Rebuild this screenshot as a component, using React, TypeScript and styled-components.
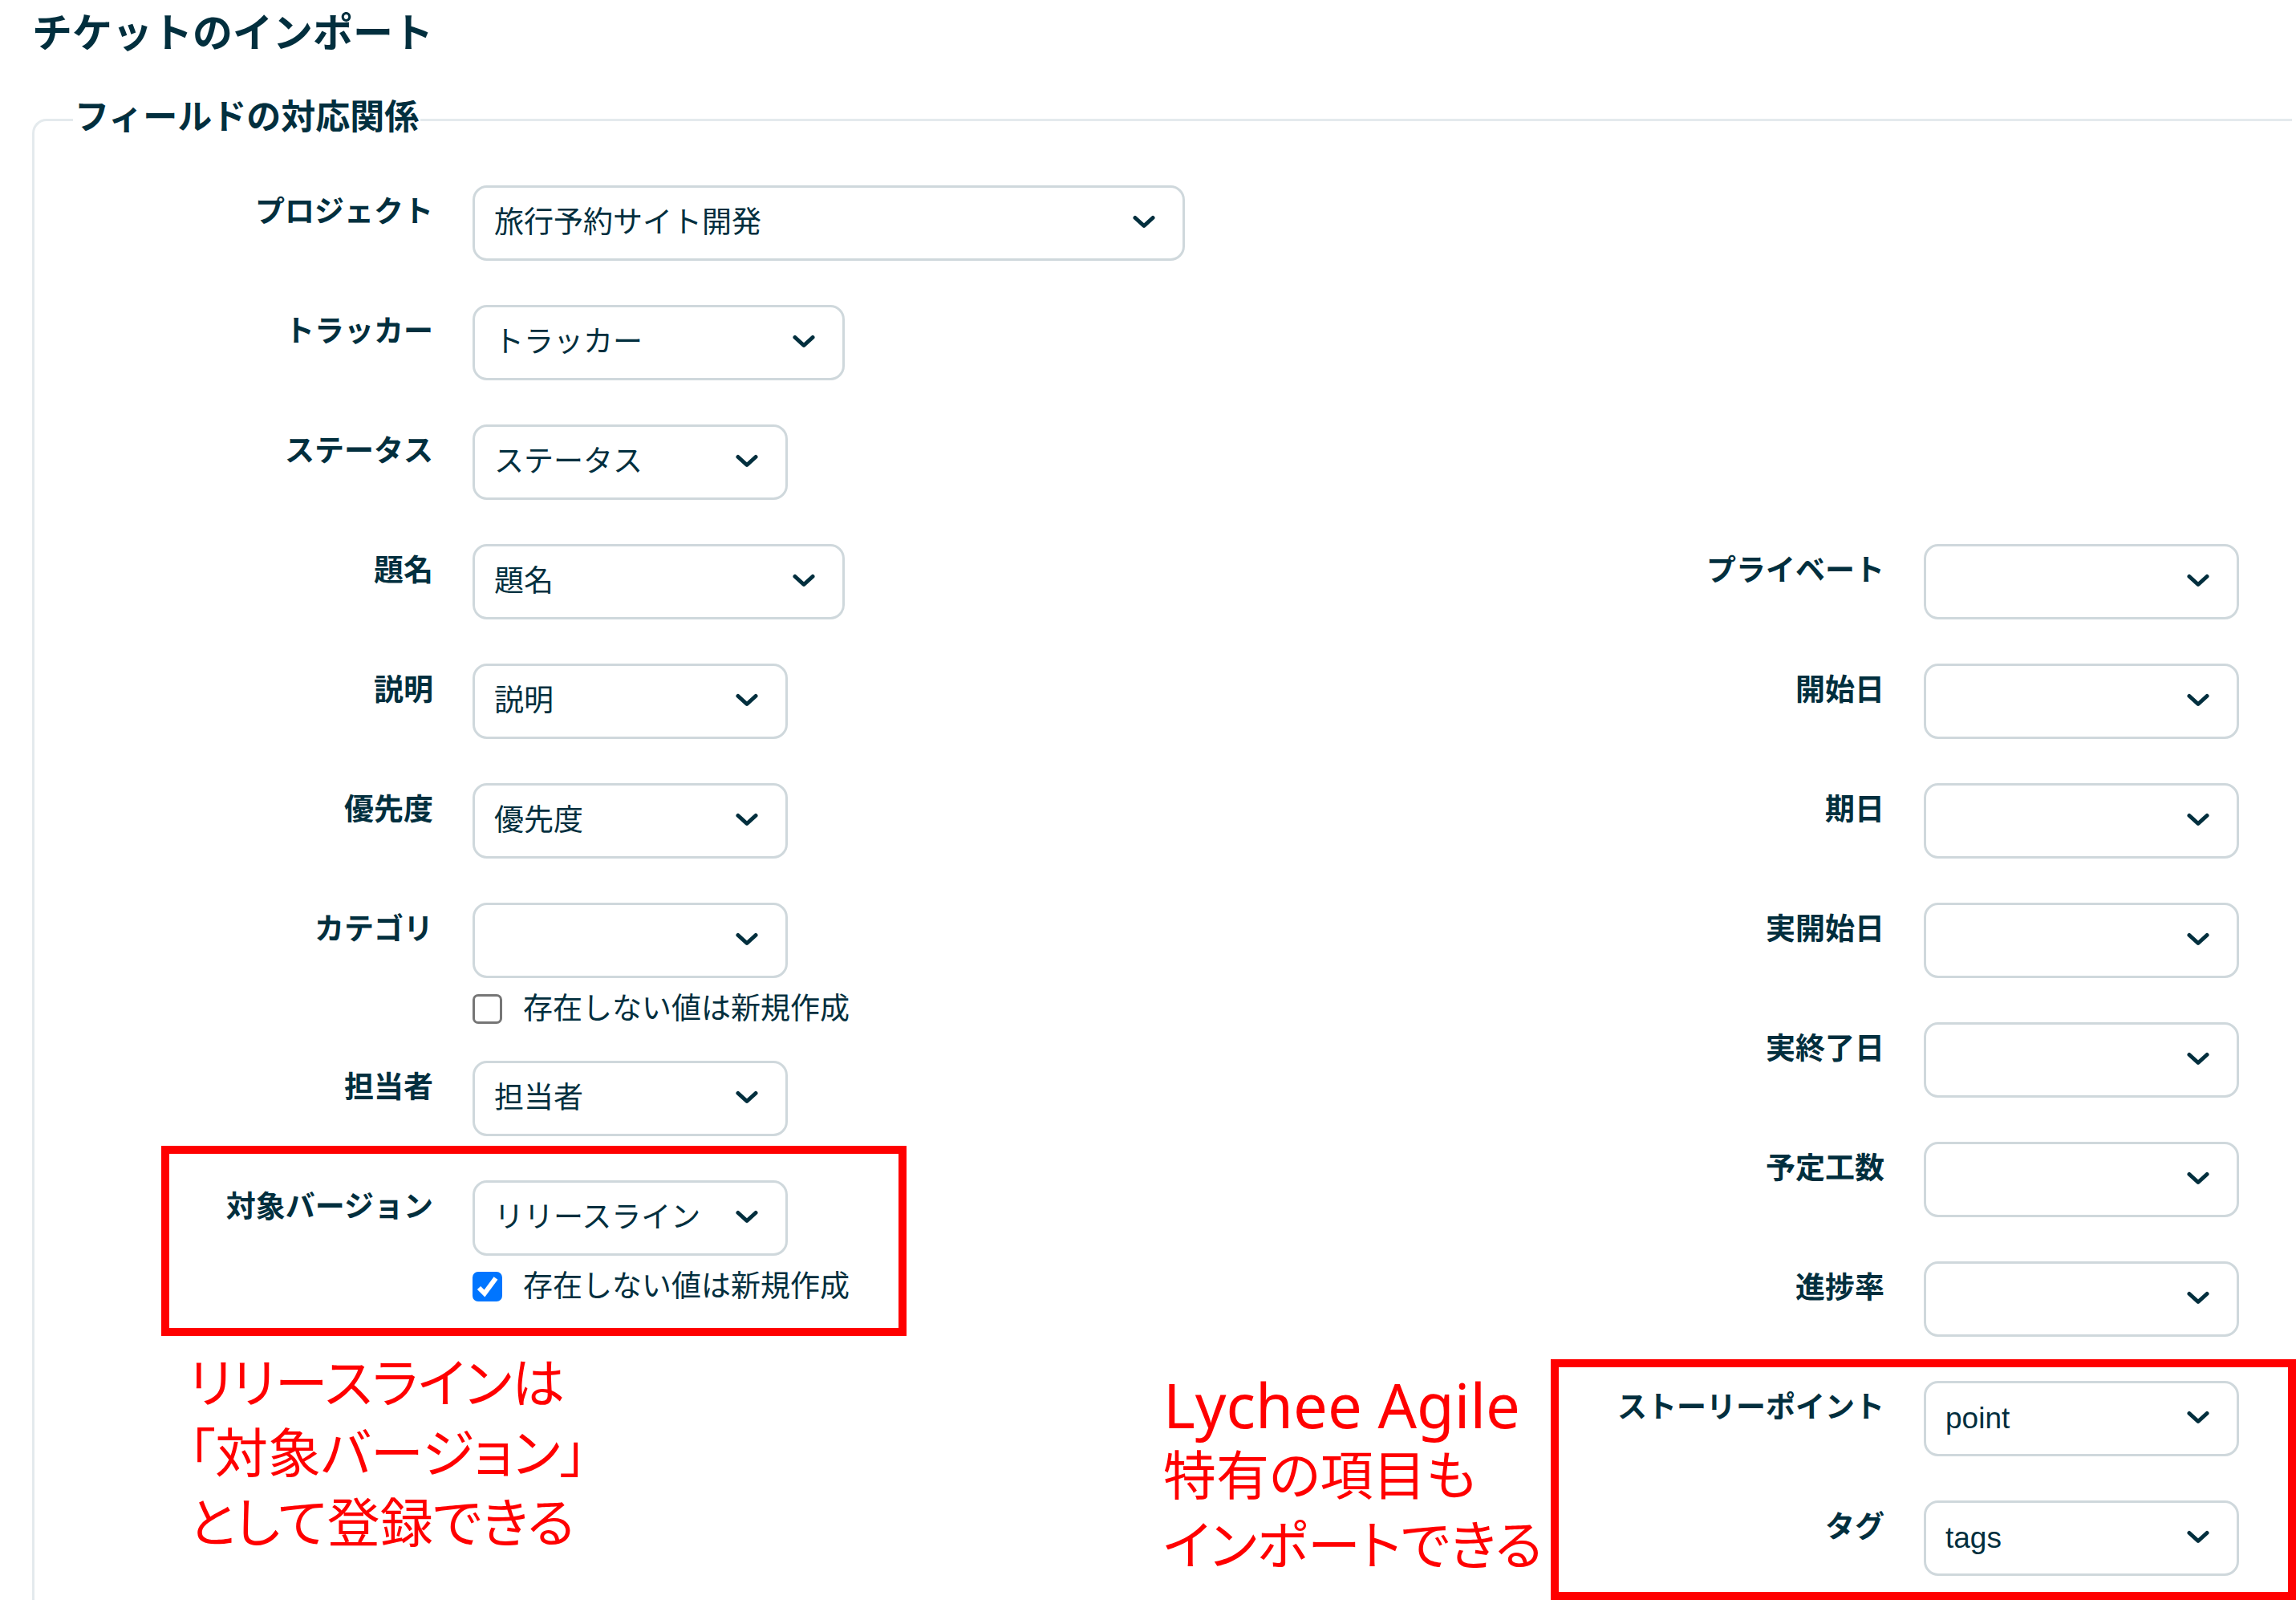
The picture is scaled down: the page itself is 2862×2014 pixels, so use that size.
import React from "react";
import styled, { createGlobalStyle } from "styled-components";

const ink = "#022f3e";
const red = "#ff0000";

const GlobalStyle = createGlobalStyle`
  * { box-sizing: border-box; }
  body {
    margin: 0;
    background: #fff;
    color: ${ink};
    font-family: "Liberation Sans", "Noto Sans CJK JP", sans-serif;
    font-size: 37px;
  }
`;

const Page = styled.main`
  padding: 6px 5px 20px 40px;
  overflow-x: clip;
`;

const Title = styled.h1`
  margin: 0 0 42px;
  font-size: 50px;
  line-height: 72px;
  font-weight: 700;
`;

const Fieldset = styled.fieldset`
  min-width: 0;
  margin: 0;
  padding: 53px 66px 30px 48px;
  border: 3px solid #e4eaed;
  border-right: 0;
  border-bottom: 0;
  border-radius: 18px 0 0 0;
`;

const Legend = styled.legend`
  padding: 0 2px 6px;
  font-size: 43px;
  line-height: 52px;
  font-weight: 700;
`;

const Columns = styled.div`
  display: flex;
  justify-content: space-between;
  align-items: flex-start;
`;

const Column = styled.div`
  display: flex;
  flex-direction: column;
`;

const Row = styled.div`
  display: grid;
  grid-template-columns: 449px auto;
  column-gap: 49px;
  align-items: start;
  justify-content: start;
  min-height: 149px;
  padding-bottom: 46px;
`;

const LastRow = styled(Row)`
  min-height: 0;
  padding-bottom: 0;
`;

const FieldLabel = styled.label`
  padding-top: 6px;
  line-height: 56px;
  font-weight: 700;
  text-align: right;
  white-space: nowrap;
`;

const Control = styled.div`
  display: flex;
  flex-direction: column;
  align-items: flex-start;
  gap: 20px;
`;

const SelectBox = styled.div`
  display: grid;
  align-items: center;

  > * { grid-area: 1 / 1; }

  > svg {
    justify-self: end;
    margin: 0 37px 2px 0;
    pointer-events: none;
  }
`;

const widths = { regular: 393, wide: 464, full: 888 };
type Size = keyof typeof widths;

const Select = styled.select<{ $size: Size }>`
  appearance: none;
  width: ${(p) => widths[p.$size]}px;
  height: 94px;
  margin: 0;
  padding: 0 80px 2px 24px;
  border: 3px solid #cfd8dc;
  border-radius: 18px;
  background: #fff;
  color: inherit;
  font: inherit;
`;

const CheckLabel = styled.label`
  display: flex;
  align-items: center;
  gap: 26px;
  height: 37px;
  line-height: 37px;
  white-space: nowrap;
`;

const CheckBox = styled.span`
  display: grid;

  > * { grid-area: 1 / 1; }
  > svg { pointer-events: none; }
`;

const CheckInput = styled.input`
  appearance: none;
  width: 37px;
  height: 37px;
  margin: 0;
  border: 3px solid #767676;
  border-radius: 7px;
  background: #fff;

  & + svg { visibility: hidden; }
  &:checked { border-color: #0075ff; background: #0075ff; }
  &:checked + svg { visibility: visible; }
`;

const Group = styled.div`
  position: relative;
`;

const Highlight = styled.div<{ $side: "left" | "right" }>`
  position: absolute;
  width: 929px;
  border: 10px solid ${red};
  pointer-events: none;
  ${(p) =>
    p.$side === "left"
      ? "left: 110px; top: -43px; bottom: -43px;"
      : "right: -71px; top: -27px; bottom: -30px;"}
`;

const Note = styled.p<{ $side: "left" | "right" }>`
  position: absolute;
  margin: 0;
  color: ${red};
  font-size: 66px;
  line-height: 87px;
  font-feature-settings: "palt";
  white-space: nowrap;
  ${(p) =>
    p.$side === "left"
      ? "left: 144px; top: 211px;"
      : "left: -450px; top: -16px;"}
`;

const Latin = styled.span`
  display: block;
  font-family: "Noto Sans", sans-serif;
  font-size: 76px;
  line-height: 92px;
`;

type FieldProps = {
  id: string;
  label: string;
  value?: string;
  size?: Size;
  create?: boolean;
  last?: boolean;
};

function Field({ id, label, value = "", size = "regular", create, last }: FieldProps) {
  const Wrapper = last ? LastRow : Row;
  return (
    <Wrapper>
      <FieldLabel htmlFor={id}>{label}</FieldLabel>
      <Control>
        <SelectBox>
          <Select id={id} $size={size} defaultValue={value}>
            <option value={value}>{value}</option>
          </Select>
          <svg width="28" height="18" viewBox="0 0 28 18" fill="none" aria-hidden="true">
            <path d="M3 3.5 14 13.5 25 3.5" stroke={ink} strokeWidth="5" strokeLinejoin="round" strokeLinecap="round" />
          </svg>
        </SelectBox>
        {create !== undefined && (
          <CheckLabel>
            <CheckBox>
              <CheckInput type="checkbox" defaultChecked={create} />
              <svg width="37" height="37" viewBox="0 0 37 37" fill="none" aria-hidden="true">
                <path d="M8 20 15 27 29 8" stroke="#fff" strokeWidth="6" />
              </svg>
            </CheckBox>
            存在しない値は新規作成
          </CheckLabel>
        )}
      </Control>
    </Wrapper>
  );
}

export default function App() {
  return (
    <>
      <GlobalStyle />
      <Page>
        <Title>チケットのインポート</Title>
        <Fieldset>
          <Legend>フィールドの対応関係</Legend>
          <Field id="project" label="プロジェクト" value="旅行予約サイト開発" size="full" />
          <Field id="tracker" label="トラッカー" value="トラッカー" size="wide" />
          <Field id="status" label="ステータス" value="ステータス" />
          <Columns>
            <Column>
              <Field id="subject" label="題名" value="題名" size="wide" />
              <Field id="description" label="説明" value="説明" />
              <Field id="priority" label="優先度" value="優先度" />
              <Field id="category" label="カテゴリ" create={false} />
              <Field id="assignee" label="担当者" value="担当者" />
              <Group>
                <Field id="version" label="対象バージョン" value="リリースライン" create last />
                <Highlight $side="left" />
                <Note $side="left">
                  リリースラインは
                  <br />
                  「対象バージョン」
                  <br />
                  として登録できる
                </Note>
              </Group>
            </Column>
            <Column>
              <Field id="private" label="プライベート" />
              <Field id="start" label="開始日" />
              <Field id="due" label="期日" />
              <Field id="actual-start" label="実開始日" />
              <Field id="actual-end" label="実終了日" />
              <Field id="estimate" label="予定工数" />
              <Field id="progress" label="進捗率" />
              <Group>
                <Field id="points" label="ストーリーポイント" value="point" />
                <Field id="tags" label="タグ" value="tags" last />
                <Highlight $side="right" />
                <Note $side="right">
                  <Latin>Lychee Agile</Latin>
                  特有の項目も
                  <br />
                  インポートできる
                </Note>
              </Group>
            </Column>
          </Columns>
        </Fieldset>
      </Page>
    </>
  );
}
